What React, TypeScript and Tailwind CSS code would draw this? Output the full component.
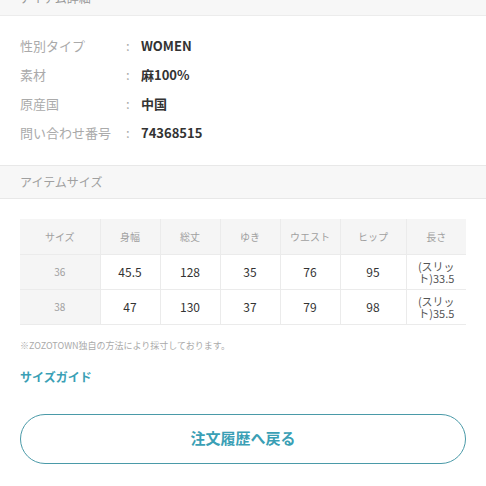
const details = [
  { label: "性別タイプ", value: "WOMEN" },
  { label: "素材", value: "麻100%" },
  { label: "原産国", value: "中国" },
  { label: "問い合わせ番号", value: "74368515" },
];

const heads = ["サイズ", "身幅", "総丈", "ゆき", "ウエスト", "ヒップ", "長さ"];

const rows = [
  ["36", "45.5", "128", "35", "76", "95", "(スリット)33.5"],
  ["38", "47", "130", "37", "79", "98", "(スリット)35.5"],
];

export default function App() {
  return (
    <div
      className="w-[486px] h-[486px] overflow-hidden bg-white"
      style={{ fontFamily: '"Noto Sans CJK JP", "Noto Sans", sans-serif' }}
    >
      {/* アイテム詳細 header (cut off at top) */}
      <div className="h-[16px] bg-[#f7f7f7] border-b border-[#ececec] relative overflow-hidden">
        <div className="absolute left-[20px] top-[-9px] text-[12px] leading-[14px] text-[#999]">
          アイテム詳細
        </div>
      </div>

      <div className="pt-[15px] pb-[18px] px-[20px]">
        {details.map((d) => (
          <div key={d.label} className="flex items-center h-[29px] text-[13px]">
            <div className="w-[106px] text-[#aaa]">{d.label}</div>
            <div className="w-[15px] text-[#aaa]">:</div>
            <div className="font-bold text-[#333]">{d.value}</div>
          </div>
        ))}
      </div>

      <div className="h-[34px] bg-[#f7f7f7] border-y border-[#e8e8e8] flex items-center px-[20px] text-[12px] text-[#a0a0a0]">
        アイテムサイズ
      </div>

      <div className="px-[20px] pt-[20px]">
        <table className="w-[446px] border-collapse table-fixed">
          <colgroup>
            <col className="w-[80px]" />
            <col className="w-[60px]" />
            <col className="w-[60px]" />
            <col className="w-[60px]" />
            <col className="w-[60px]" />
            <col className="w-[66px]" />
            <col className="w-[60px]" />
          </colgroup>
          <thead>
            <tr className="h-[35px] bg-[#f5f5f5]">
              {heads.map((h) => (
                <th key={h} className="font-normal text-[10px] text-[#a0a0a0] border border-[#ebebeb] border-l-0 border-t-0 first:border-l-0 last:border-r-0">
                  {h}
                </th>
              ))}
            </tr>
          </thead>
          <tbody>
            {rows.map((r) => (
              <tr key={r[0]} className="h-[35px]">
                {r.map((c, i) =>
                  i === 0 ? (
                    <td key={i} className="bg-[#f5f5f5] text-center text-[10px] text-[#a0a0a0] border-b border-[#ebebeb]">
                      {c}
                    </td>
                  ) : i === 6 ? (
                    <td key={i} className="text-center px-[8px] text-[11px] leading-[12px] text-[#555] border border-[#ebebeb] border-r-0">
                      {c}
                    </td>
                  ) : (
                    <td key={i} className="text-center text-[12px] text-[#333] border border-[#ebebeb]">
                      {c}
                    </td>
                  ),
                )}
              </tr>
            ))}
          </tbody>
        </table>
      </div>

      <div className="px-[20px] pt-[15px] text-[9px] leading-[12px] text-[#aaa]">
        ※ZOZOTOWN独自の方法により採寸しております。
      </div>

      <div className="px-[20px] pt-[17px] text-[12px] leading-[16px] font-bold text-[#3a9fb5]">
        サイズガイド
      </div>

      <div className="px-[20px] pt-[29px]">
        <button className="w-[446px] h-[50px] rounded-full border border-[#4a9aa8] flex items-center justify-center text-[15px] font-bold text-[#3a9fb5]">
          注文履歴へ戻る
        </button>
      </div>
    </div>
  );
}
